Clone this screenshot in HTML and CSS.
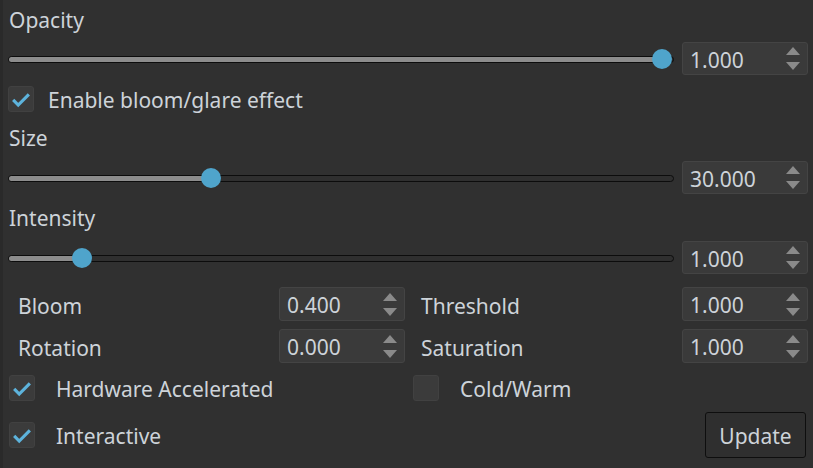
FILE: index.html
```html
<!DOCTYPE html>
<html>
<head>
<meta charset="utf-8">
<link rel="stylesheet" href="styles.css">
</head>
<body>
<div class="panel">
  <div class="label">Opacity</div>
  <div class="slider-row">
    <div class="slider">
      <div class="track"><div class="fill" style="width:98%"></div></div>
      <div class="handle" style="--p:1"></div>
    </div>
    <div class="spin"><span class="val">1.000</span><span class="arrows"><i class="up"></i><i class="down"></i></span></div>
  </div>
  <div class="check-row first">
    <span class="box on"><svg viewBox="0 0 26 26"><polyline points="4.5,14 10,19.5 21.5,8" /></svg></span>
    <span class="ctext near">Enable bloom/glare effect</span>
  </div>
  <div class="label size">Size</div>
  <div class="slider-row">
    <div class="slider">
      <div class="track"><div class="fill" style="width:30%"></div></div>
      <div class="handle" style="--p:0.3"></div>
    </div>
    <div class="spin"><span class="val">30.000</span><span class="arrows"><i class="up"></i><i class="down"></i></span></div>
  </div>
  <div class="label intensity">Intensity</div>
  <div class="slider-row">
    <div class="slider">
      <div class="track"><div class="fill" style="width:10%"></div></div>
      <div class="handle" style="--p:0.1"></div>
    </div>
    <div class="spin"><span class="val">1.000</span><span class="arrows"><i class="up"></i><i class="down"></i></span></div>
  </div>
  <div class="grid">
    <div class="cell"><span class="glabel">Bloom</span><div class="spin"><span class="val">0.400</span><span class="arrows"><i class="up"></i><i class="down"></i></span></div></div>
    <div class="cell"><span class="glabel">Threshold</span><div class="spin"><span class="val">1.000</span><span class="arrows"><i class="up"></i><i class="down"></i></span></div></div>
    <div class="cell"><span class="glabel">Rotation</span><div class="spin"><span class="val">0.000</span><span class="arrows"><i class="up"></i><i class="down"></i></span></div></div>
    <div class="cell"><span class="glabel">Saturation</span><div class="spin"><span class="val">1.000</span><span class="arrows"><i class="up"></i><i class="down"></i></span></div></div>
  </div>
  <div class="opts">
    <div class="check-row half">
      <span class="box on"><svg viewBox="0 0 26 26"><polyline points="4.5,14 10,19.5 21.5,8" /></svg></span>
      <span class="ctext">Hardware Accelerated</span>
    </div>
    <div class="check-row rest">
      <span class="box"></span>
      <span class="ctext">Cold/Warm</span>
    </div>
  </div>
  <div class="last-row">
    <div class="check-row">
      <span class="box on"><svg viewBox="0 0 26 26"><polyline points="4.5,14 10,19.5 21.5,8" /></svg></span>
      <span class="ctext">Interactive</span>
    </div>
    <button class="btn">Update</button>
  </div>
</div>
</body>
</html>
```
FILE: styles.css
```css
html, body {
  margin: 0;
  padding: 0;
}
body {
  width: 813px;
  height: 468px;
  background: #303030;
  font-family: "Noto Sans", "Open Sans", sans-serif;
  font-size: 21px;
  color: #cdd3d9;
  overflow: hidden;
}
.panel {
  box-sizing: border-box;
  height: 468px;
  border-left: 3px solid #2a2a2a;
  padding: 0 5px 0 5px;
  display: flex;
  flex-direction: column;
}
.label {
  height: 40px;
  line-height: 40px;
  padding-left: 1px;
  flex: none;
}
.label.size {
  margin-top: 6px;
}
.label.intensity {
  margin-top: 4px;
}
.label.size + .slider-row,
.label.intensity + .slider-row {
  margin-top: 3px;
}
.slider-row {
  margin-top: 2px;
  height: 33px;
  display: flex;
  align-items: center;
  gap: 8px;
  flex: none;
}
.slider {
  position: relative;
  flex: 1;
  height: 20px;
}
.track {
  position: absolute;
  left: 0;
  right: 0;
  top: 7px;
  height: 7px;
  box-sizing: border-box;
  border: 1px solid #0c0c0c;
  border-radius: 4px;
  background: #2f2f2f;
  overflow: hidden;
}
.fill {
  height: 100%;
  background: #8c8c8c;
}
.handle {
  position: absolute;
  top: 0;
  left: calc(10px + var(--p, 0) * (100% - 22px));
  width: 20px;
  height: 20px;
  border-radius: 50%;
  background: #4fa4cb;
  margin-left: -10px;
}
.spin {
  box-sizing: border-box;
  width: 126px;
  height: 33px;
  background: #3a3a3a;
  border: 1px solid #444444;
  border-radius: 3px;
  display: flex;
  align-items: center;
  justify-content: space-between;
  padding: 0 7px 0 7px;
  flex: none;
}
.val {
  line-height: 1;
  padding-top: 3px;
}
.arrows {
  display: flex;
  flex-direction: column;
  gap: 7px;
}
.arrows i {
  display: block;
  width: 0;
  height: 0;
  border-left: 7px solid transparent;
  border-right: 7px solid transparent;
}
.arrows .up {
  border-bottom: 8px solid #8a8a8a;
}
.arrows .down {
  border-top: 8px solid #8a8a8a;
}
.check-row {
  display: flex;
  align-items: center;
  height: 26px;
  flex: none;
}
.check-row.first {
  margin-top: 11px;
}
.box {
  box-sizing: border-box;
  width: 26px;
  height: 26px;
  background: #3b3b3b;
  border: 1px solid #414141;
  border-radius: 3px;
  display: block;
  flex: none;
}
.box svg {
  display: block;
  width: 24px;
  height: 24px;
}
.box polyline {
  fill: none;
  stroke: #5db3dc;
  stroke-width: 3.4;
  stroke-linecap: butt;
  stroke-linejoin: miter;
}
.ctext {
  margin-left: 21px;
  padding-top: 2px;
}
.ctext.near {
  margin-left: 14px;
}
.grid {
  margin-top: 13px;
  padding-left: 10px;
  display: grid;
  grid-template-columns: 1fr 1fr;
  column-gap: 16px;
  row-gap: 8px;
  flex: none;
}
.cell {
  display: flex;
  align-items: center;
  justify-content: space-between;
  height: 34px;
}
.cell .spin {
  height: 34px;
}
.glabel {
  padding-top: 3px;
}
.opts {
  margin-top: 12px;
  display: flex;
  padding-left: 1px;
  flex: none;
}
.check-row.half {
  width: 404px;
  flex: none;
}
.check-row.rest {
  flex: 1;
}
.last-row {
  margin-top: 11px;
  display: flex;
  align-items: center;
  justify-content: space-between;
  padding-left: 1px;
  flex: none;
}
.btn {
  box-sizing: border-box;
  width: 101px;
  height: 46px;
  background: #2f2f2f;
  border: 1px solid #0e0e0e;
  border-radius: 3px;
  color: #cdd3d9;
  font-family: inherit;
  font-size: 21px;
  padding: 2px 0 0 0;
  margin-right: 2px;
}
```
